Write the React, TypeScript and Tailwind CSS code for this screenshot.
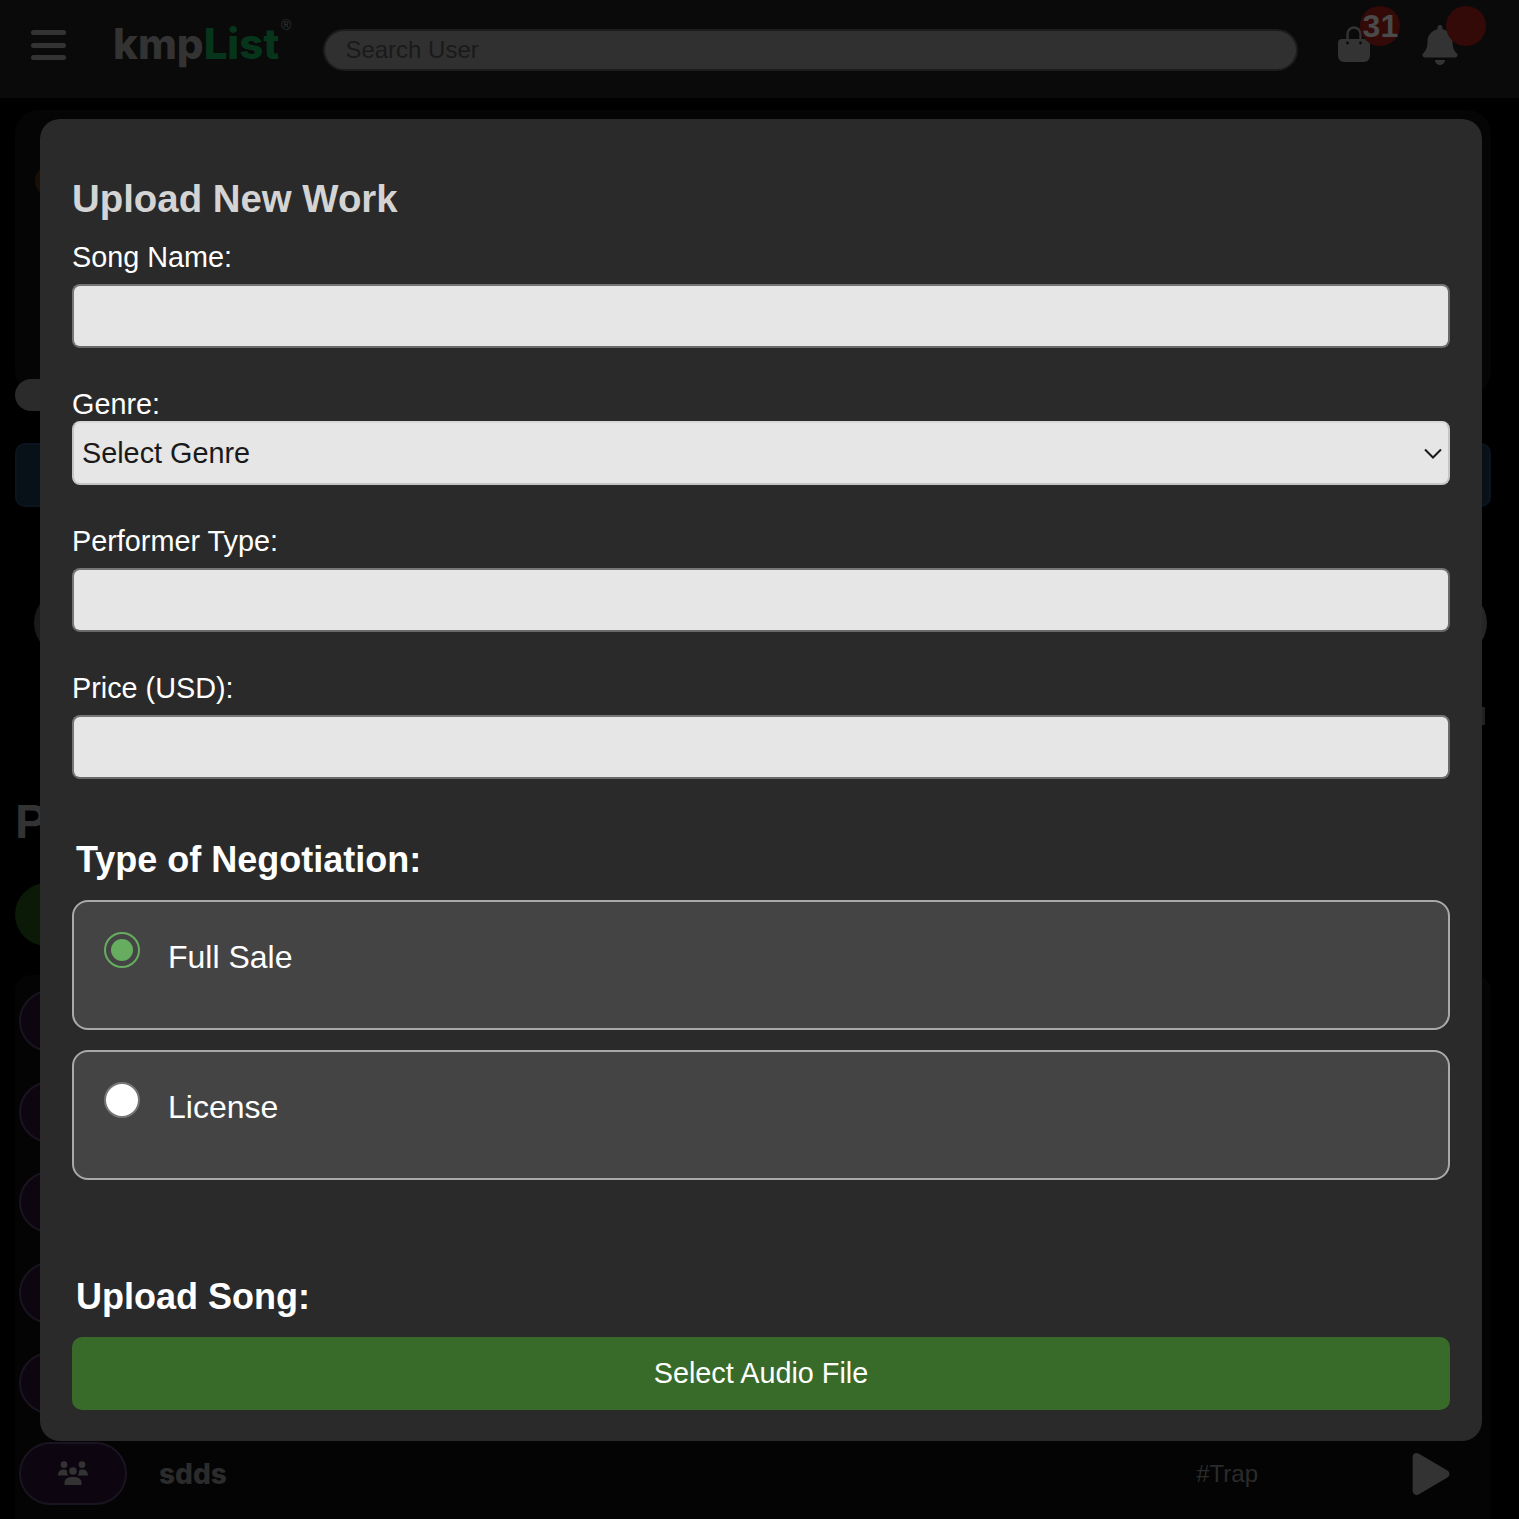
import { FaBell, FaPlay } from "react-icons/fa";

const sans = "font-['Liberation_Sans',Arial,sans-serif]";

function BagIcon() {
  return (
    <svg viewBox="0 0 32 36" className="h-[36px] w-[32px]" fill="#333">
      <path d="M9.5 16V8a6.5 6.5 0 0 1 13 0v8" fill="none" stroke="#333" strokeWidth="2.4" />
      <path d="M4 13h24a4 4 0 0 1 4 4v13a6 6 0 0 1-6 6H6a6 6 0 0 1-6-6V17a4 4 0 0 1 4-4z" />
      <circle cx="9.5" cy="17" r="1.4" fill="#0a0a0a" />
      <circle cx="22.5" cy="17" r="1.4" fill="#0a0a0a" />
    </svg>
  );
}

function GroupIcon() {
  return (
    <svg viewBox="0 0 30 24" className="h-[24px] w-[30px]" fill="#333">
      <circle cx="6" cy="3.6" r="3.4" />
      <circle cx="24" cy="3.6" r="3.4" />
      <circle cx="15" cy="10" r="3.8" />
      <path d="M0 14.5C0 10.5 2.5 8.5 5.5 8.5c1.6 0 2.8.5 3.6 1.4-.4 2.2.5 3.7 1.6 4.6H0z" />
      <path d="M30 14.5c0-4-2.5-6-5.5-6-1.6 0-2.8.5-3.6 1.4.4 2.2-.5 3.7-1.6 4.6H30z" />
      <path d="M6.5 24v-2.5c0-3.7 3.5-5.5 8.5-5.5s8.5 1.8 8.5 5.5V24z" />
    </svg>
  );
}

function Background() {
  return (
    <div className={`h-[1519px] overflow-hidden bg-black ${sans}`}>
      <header className="flex h-[98px] items-center bg-[#0a0a0a] pb-[2px]">
        <div className="mb-[6px] ml-[31px] flex w-[35px] flex-col gap-[7.5px]">
          <span className="h-[5px] rounded-full bg-[#333]" />
          <span className="h-[5px] rounded-full bg-[#333]" />
          <span className="h-[5px] rounded-full bg-[#333]" />
        </div>
        <div className="relative mb-[8px] ml-[47px] font-['Inter',sans-serif] text-[42px] font-extrabold leading-none text-[#333]">
          kmp<span className="text-[#06351c]">List</span>
          <span className="absolute -right-[12px] top-[-5px] font-['Liberation_Sans',sans-serif] text-[14px] font-normal">®</span>
        </div>
        <div className="ml-[44px] mt-[3px] h-[42px] w-[975px] shrink-0 rounded-full border-2 border-[#1c1c1c] bg-[#303030] pl-[20px] text-[24px] leading-[38px] text-[#1a1a1a]">
          Search User
        </div>
        <div className="relative mb-[9px] ml-[40px] shrink-0">
          <BagIcon />
          <span className="absolute -top-[20px] left-[22px] flex size-[40px] items-center justify-center rounded-full bg-[#330a07] text-[32px] font-bold leading-none text-[#4a4a4a]">
            31
          </span>
        </div>
        <div className="relative mb-[6px] ml-[50px] shrink-0">
          <FaBell className="size-[40px] text-[#333]" />
          <span className="absolute -top-[19px] left-[26px] size-[40px] rounded-full bg-[#330a07]" />
        </div>
      </header>

      <main className="ml-[15px] w-[1476px]">
        <div className="mt-[12px] h-[285px] rounded-[24px] bg-[#050505] pl-[20px] pt-[55px]">
          <div className="h-[32px] w-[40px] rounded-l-full bg-[#1a0f06]" />
        </div>
        <div className="relative -mt-[16px] h-[32px] w-[80px] rounded-full bg-[#2b2b2b]" />
        <div className="mt-[32px] h-[64px] rounded-[10px] border-2 border-[#0c1420] bg-[#081018]" />
        <div className="ml-[19px] mr-[4px] mt-[83px] flex justify-between">
          <span className="h-[66px] w-[66px] rounded-full bg-[#1a1a1a]" />
          <span className="h-[66px] w-[66px] rounded-full bg-[#262626]" />
        </div>
        <div className="ml-auto mr-[6px] mt-[51px] h-[18px] w-[5px] bg-[#222]" />
        <h2 className="mt-[69px] text-[48px] font-bold leading-[56px] text-[#333]">P</h2>
        <div className="mt-[33px] h-[63px] w-[80px] rounded-full bg-[#0a1a06]" />
        <section className="mt-[29px] rounded-t-[16px] bg-[#040404] pb-[20px] pl-[4px] pt-[15px]">
          <div className="flex flex-col gap-[28.5px]">
            {[0, 1, 2, 3, 4].map((i) => (
              <div key={i} className="h-[62px] w-[108px] rounded-full border-2 border-[#1a1420] bg-[#0d0510]" />
            ))}
          </div>
          <div className="mt-[28px] flex items-center">
            <div className="flex h-[63px] w-[108px] items-center justify-center rounded-full border-2 border-[#1a1420] bg-[#0d0510] pb-[2px]">
              <GroupIcon />
            </div>
            <span className="ml-[32px] font-['Inter',sans-serif] text-[28px] font-extrabold text-[#2b2b2b]">sdds</span>
            <span className="ml-auto mr-[152px] text-[24px] text-[#2b2b2b]">#Trap</span>
            <FaPlay className="mr-[39px] size-[42px] text-[#333]" />
          </div>
        </section>
      </main>
    </div>
  );
}

function Field({ label, children, className = "" }: { label: string; children: React.ReactNode; className?: string }) {
  return (
    <div className={className}>
      <label className="block h-[34px] text-[28.8px] leading-[34px] text-white">{label}</label>
      {children}
    </div>
  );
}

const inputClass =
  "mt-[10px] block h-[64px] w-full rounded-[8px] border-2 border-t-[#767676] border-l-[#767676] border-r-[#6a6a6a] border-b-[#6a6a6a] bg-[#e6e6e6] px-[8px] text-[28.8px] text-black";

function RadioCard({ label, checked }: { label: string; checked?: boolean }) {
  return (
    <label className="flex h-[130px] items-start rounded-[16px] border-2 border-[#a9a9a9] bg-[#444] pl-[30px] pt-[30px]">
      {checked ? (
        <span className="flex size-[36px] items-center justify-center rounded-full border-2 border-[#66ad5f] bg-[#444]">
          <span className="size-[22px] rounded-full bg-[#66ad5f]" />
        </span>
      ) : (
        <span className="size-[36px] rounded-full border-2 border-[#767676] bg-white" />
      )}
      <span className="ml-[28px] mt-[4px] text-[32px] leading-[42px] text-white">{label}</span>
    </label>
  );
}

function Modal() {
  return (
    <div className={`absolute left-[40px] top-[119px] w-[1442px] rounded-[20px] bg-[#2a2a2a] px-[32px] pb-[31px] pt-[58px] ${sans}`}>
      <h1 className="h-[44px] text-[38.4px] font-bold leading-[44px] text-[#d4d4d4]">Upload New Work</h1>
      <Field label="Song Name:" className="mt-[19px]">
        <input className={inputClass} />
      </Field>
      <div className="mt-[39px]">
        <label className="block h-[34px] text-[28.8px] leading-[34px] text-white">Genre:</label>
        <div className="relative">
          <select className="block h-[64px] w-full appearance-none rounded-[8px] border-2 border-[#c4c4c4] border-t-[#d8d8d8] bg-[#e6e6e6] pl-[8px] pt-[1px] text-[28.8px] text-[#1a1a1a]">
            <option>Select Genre</option>
          </select>
          <svg viewBox="0 0 18 12" className="absolute right-[8px] top-[27px] h-[12px] w-[18px]" fill="none" stroke="#1a1a1a" strokeWidth="2">
            <path d="M1 1.5l8 8 8-8" />
          </svg>
        </div>
      </div>
      <Field label="Performer Type:" className="mt-[39px]">
        <input className={inputClass} />
      </Field>
      <Field label="Price (USD):" className="mt-[39px]">
        <input className={inputClass} />
      </Field>
      <h2 className="ml-[4px] mt-[59px] h-[44px] text-[36px] font-bold leading-[44px] text-white">Type of Negotiation:</h2>
      <div className="mt-[18px] flex flex-col gap-[20px]">
        <RadioCard label="Full Sale" checked />
        <RadioCard label="License" />
      </div>
      <h2 className="ml-[4px] mt-[95px] h-[44px] text-[36px] font-bold leading-[44px] text-white">Upload Song:</h2>
      <button className="mt-[18px] block h-[73px] w-full rounded-[10px] bg-[#386b29] text-[28.8px] text-white">Select Audio File</button>
    </div>
  );
}

export default function App() {
  return (
    <div className="relative">
      <Background />
      <Modal />
    </div>
  );
}
